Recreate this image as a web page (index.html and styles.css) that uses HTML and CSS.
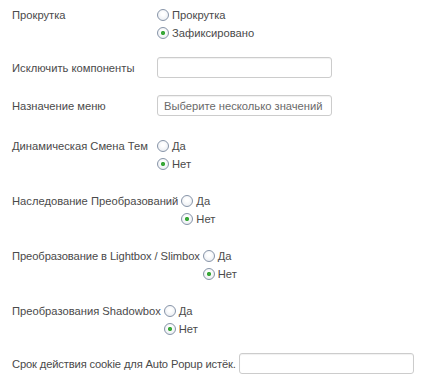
FILE: index.html
```html
<!DOCTYPE html>
<html lang="ru">
<head>
  <meta charset="UTF-8">
  <title>Настройки</title>
  <link rel="stylesheet" href="styles.css">
</head>
<body>
  <div class="options">
    <div class="row">
      <label class="row-label">Прокрутка</label>
      <fieldset class="radios">
        <label class="radio"><input type="radio" name="scroll"> Прокрутка</label>
        <label class="radio"><input type="radio" name="scroll" checked> Зафиксировано</label>
      </fieldset>
    </div>
    <div class="row row-input">
      <label class="row-label">Исключить компоненты</label>
      <input class="text-input" type="text">
    </div>
    <div class="row row-input">
      <label class="row-label">Назначение меню</label>
      <input class="text-input" type="text" placeholder="Выберите несколько значений">
    </div>
    <div class="row">
      <label class="row-label">Динамическая Смена Тем</label>
      <fieldset class="radios">
        <label class="radio"><input type="radio" name="themes"> Да</label>
        <label class="radio"><input type="radio" name="themes" checked> Нет</label>
      </fieldset>
    </div>
    <div class="row">
      <label class="row-label">Наследование Преобразований</label>
      <fieldset class="radios">
        <label class="radio"><input type="radio" name="inherit"> Да</label>
        <label class="radio"><input type="radio" name="inherit" checked> Нет</label>
      </fieldset>
    </div>
    <div class="row">
      <label class="row-label label-narrow">Преобразование в Lightbox / Slimbox</label>
      <fieldset class="radios">
        <label class="radio"><input type="radio" name="lightbox"> Да</label>
        <label class="radio"><input type="radio" name="lightbox" checked> Нет</label>
      </fieldset>
    </div>
    <div class="row">
      <label class="row-label">Преобразования Shadowbox</label>
      <fieldset class="radios">
        <label class="radio"><input type="radio" name="shadowbox"> Да</label>
        <label class="radio"><input type="radio" name="shadowbox" checked> Нет</label>
      </fieldset>
    </div>
    <div class="row row-input row-last">
      <label class="row-label label-tight">Срок действия cookie для Auto Popup истёк.</label>
      <input class="text-input" type="text">
    </div>
  </div>
</body>
</html>
```

FILE: styles.css
```css
* {
  box-sizing: border-box;
}
body {
  margin: 0;
  padding: 6px 12px 0;
  background: #ffffff;
  font-family: "Liberation Sans", Arial, sans-serif;
  font-size: 11.2px;
  color: #4a4a4a;
}
.row {
  display: flex;
  align-items: flex-start;
  margin-bottom: 19px;
}
.row-label {
  flex-shrink: 0;
  min-width: 145px;
  line-height: 18px;
  padding-right: 3px;
  white-space: nowrap;
}
.label-tight {
  letter-spacing: -0.15px;
}
.label-narrow {
  letter-spacing: -0.09px;
}
.radios {
  margin: 0;
  padding: 0;
  border: none;
  display: flex;
  flex-direction: column;
}
.radio {
  display: flex;
  align-items: center;
  height: 18px;
  line-height: 18px;
}
.radio input {
  -webkit-appearance: none;
  appearance: none;
  width: 12px;
  height: 12px;
  margin: 0 3px 0 0;
  border: 1px solid #8794a8;
  border-radius: 50%;
  background: radial-gradient(circle at 50% 40%, #ffffff 20%, #e4e8ee 100%);
}
.radio input:checked {
  background: radial-gradient(circle, #3aa83a 0, #3aa83a 1.8px, transparent 2.4px),
    radial-gradient(circle at 50% 40%, #ffffff 20%, #e4e8ee 100%);
}
.row-input {
  align-items: center;
  margin-top: -4px;
  margin-bottom: 21px;
}
.row-last {
  margin-bottom: 0;
}
.text-input {
  flex-shrink: 0;
  width: 175px;
  height: 21px;
  padding: 2px 6px;
  border: 1px solid #cccccc;
  border-radius: 3px;
  box-shadow: inset 0 1px 1px rgba(0, 0, 0, 0.06);
  font-family: inherit;
  font-size: 11.2px;
  color: #555555;
}
.text-input::placeholder {
  color: #6a6a6a;
}
```
